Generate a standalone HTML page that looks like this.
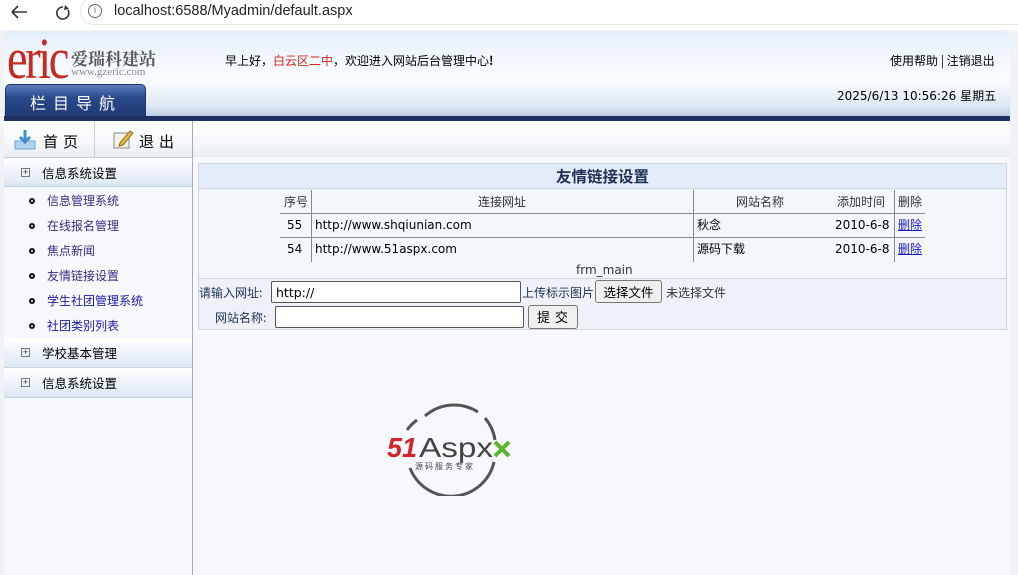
<!DOCTYPE html>
<html><head><meta charset="utf-8"><style>
*{margin:0;padding:0;box-sizing:border-box}
body{width:1018px;height:575px;overflow:hidden;background:#fff;font-family:"Liberation Sans","Noto Sans CJK SC",sans-serif;font-size:12px;color:#000;position:relative}
.abs{position:absolute}
.cjk{font-family:"Noto Sans CJK SC","WenQuanYi Zen Hei",sans-serif}
.dv{font-family:"DejaVu Sans",sans-serif}
</style></head><body>
<div class="abs" style="left:0;top:0;width:1018px;height:30px;background:#fff"></div>
<svg class="abs" style="left:8px;top:3px" width="70" height="20"><path d="M4 9h15M4 9l6-6M4 9l6 6" stroke="#333" stroke-width="1.6" fill="none"/><path d="M55 4a6 6 0 1 0 5 3" stroke="#333" stroke-width="1.6" fill="none"/><path d="M57 2l4 4-5 1z" fill="#333"/></svg>
<div class="abs" style="left:80px;top:-3px;width:960px;height:28px;border:1px solid #e5e5e5;border-radius:14px"></div>
<div class="abs" style="left:88px;top:4px;width:14px;height:14px;border:1.3px solid #666;border-radius:50%;font-size:9px;line-height:11px;text-align:center;color:#666">i</div>
<div class="abs" style="left:114px;top:3px;font-size:14.5px;color:#222">localhost:6588/Myadmin/default.aspx</div>
<div class="abs" style="left:0;top:30px;width:1018px;height:545px;background:#f0f2f5"></div>
<div class="abs" style="left:4px;top:31px;width:1006px;height:544px;background:#f6f8fc;border-radius:8px 8px 0 0"></div>
<div class="abs" style="left:4px;top:31px;width:1006px;height:86px;border-radius:8px 8px 0 0;background:linear-gradient(#e3eefb 0px,#f4f8fd 30px,#fafcff 50px,#dde7f3 75px,#b9cce3 86px)"></div>
<div class="abs" style="left:7px;top:30px;font-family:'Liberation Serif',serif;font-size:58px;color:#c5291f;line-height:58px;letter-spacing:-3px;transform:scaleX(0.8);transform-origin:left">eric</div>
<div class="abs" style="left:71px;top:45px;font-size:17px;color:#555;font-family:'Noto Serif CJK SC',serif;font-weight:bold">爱瑞科建站</div>
<div class="abs" style="left:71px;top:66px;font-size:11px;color:#888;font-family:'Liberation Serif',serif">www.gzeric.com</div>
<div class="abs" style="left:5px;top:84px;width:141px;height:33px;border-radius:5px 5px 0 0;background:linear-gradient(#5d7fbf,#2a4a8c 40%,#1f3a74);border:1px solid #20336b"></div>
<div class="abs cjk" style="left:30px;top:90px;font-size:16px;color:#fff;letter-spacing:7px">栏目导航</div>
<div class="abs cjk" style="left:225px;top:52px;font-size:12px">早上好，<span style="color:#d2261c">白云区二中</span>，欢迎进入网站后台管理中心<b>!</b></div>
<div class="abs cjk" style="left:890px;top:52px;font-size:12px">使用帮助 | 注销退出</div>
<div class="abs dv" style="left:837px;top:87px;font-size:12px">2025/6/13 10:56:26 <span class="cjk">星期五</span></div>
<div class="abs" style="left:4px;top:116px;width:1006px;height:5px;background:#1f3062"></div>
<div class="abs" style="left:4px;top:121px;width:1006px;height:36px;background:linear-gradient(#fff,#f5f7fa 60%,#e9edf2)"></div>
<div class="abs" style="left:94px;top:121px;width:1px;height:36px;background:#ccc"></div>
<div class="abs" style="left:192px;top:121px;width:1px;height:454px;background:#a5acb8"></div>
<div class="abs" style="left:4px;top:157px;width:188px;height:1px;background:#c9ced6"></div>
<svg class="abs" style="left:14px;top:129px" width="22" height="22"><rect x="1" y="12" width="20" height="8" fill="#aed3ef" stroke="#6fa0cc"/><path d="M11 1v12M6 8l5 5 5-5" stroke="#3b8ed3" stroke-width="3" fill="none"/></svg>
<div class="abs cjk" style="left:43px;top:131px;font-size:15px;letter-spacing:5px">首页</div>
<svg class="abs" style="left:112px;top:128px" width="22" height="22"><rect x="2" y="5" width="15" height="15" fill="#f4f2e6" stroke="#888"/><path d="M8 15l10-12 3 2-10 12-4 1z" fill="#e9b93d" stroke="#8a6d1e"/></svg>
<div class="abs cjk" style="left:139px;top:131px;font-size:15px;letter-spacing:5px">退出</div>
<div class="abs" style="left:4px;top:158px;width:188px;height:29px;background:linear-gradient(#fff,#eef3fa 50%,#dce7f4);border-bottom:1px solid #c6d3e3"></div>
<div class="abs" style="left:4px;top:338px;width:188px;height:30px;background:linear-gradient(#fff,#eef3fa 50%,#dce7f4);border-bottom:1px solid #c6d3e3"></div>
<div class="abs" style="left:4px;top:368px;width:188px;height:30px;background:linear-gradient(#fff,#eef3fa 50%,#dce7f4);border-bottom:1px solid #c6d3e3"></div>
<div class="abs" style="left:21px;top:168px;width:9px;height:9px;border:1px solid #777;font-size:9px;line-height:7px;text-align:center;color:#333">+</div>
<div class="abs" style="left:21px;top:348px;width:9px;height:9px;border:1px solid #777;font-size:9px;line-height:7px;text-align:center;color:#333">+</div>
<div class="abs" style="left:21px;top:378px;width:9px;height:9px;border:1px solid #777;font-size:9px;line-height:7px;text-align:center;color:#333">+</div>
<div class="abs cjk" style="left:42px;top:163px;font-size:12.5px">信息系统设置</div>
<div class="abs cjk" style="left:42px;top:343px;font-size:12.5px">学校基本管理</div>
<div class="abs cjk" style="left:42px;top:373px;font-size:12.5px">信息系统设置</div>
<div class="abs cjk" style="left:29px;top:188px;font-size:12px;line-height:25px;color:#3d2a86">
<div><span style="display:inline-block;width:6px;height:6px;border:2px solid #111;border-radius:50%;margin-right:12px;vertical-align:1px"></span>信息管理系统</div>
<div><span style="display:inline-block;width:6px;height:6px;border:2px solid #111;border-radius:50%;margin-right:12px;vertical-align:1px"></span>在线报名管理</div>
<div><span style="display:inline-block;width:6px;height:6px;border:2px solid #111;border-radius:50%;margin-right:12px;vertical-align:1px"></span>焦点新闻</div>
<div><span style="display:inline-block;width:6px;height:6px;border:2px solid #111;border-radius:50%;margin-right:12px;vertical-align:1px"></span>友情链接设置</div>
<div style="color:#1a1aa6"><span style="display:inline-block;width:6px;height:6px;border:2px solid #111;border-radius:50%;margin-right:12px;vertical-align:1px"></span>学生社团管理系统</div>
<div style="color:#1a1aa6"><span style="display:inline-block;width:6px;height:6px;border:2px solid #111;border-radius:50%;margin-right:12px;vertical-align:1px"></span>社团类别列表</div>
</div>
<div class="abs" style="left:198px;top:163px;width:809px;height:167px;border:1px solid #d0d6de;background:#eef2f8"></div>
<div class="abs" style="left:199px;top:164px;width:807px;height:25px;background:#e3ecf8;border-bottom:1px solid #cdd5df"></div>
<div class="abs cjk" style="left:556px;top:165px;font-size:15.5px;font-weight:bold;color:#1f2f55">友情链接设置</div>
<div class="abs" style="left:199px;top:190px;width:807px;height:88px;background:#f3f6fa"></div>
<div class="abs" style="left:311px;top:190px;width:1px;height:72px;background:#888"></div>
<div class="abs" style="left:693px;top:190px;width:1px;height:72px;background:#888"></div>
<div class="abs" style="left:894px;top:190px;width:1px;height:72px;background:#888"></div>
<div class="abs" style="left:280px;top:213px;width:645px;height:1px;background:#888"></div>
<div class="abs" style="left:280px;top:237px;width:645px;height:1px;background:#888"></div>
<div class="abs cjk" style="left:284px;top:193px;font-size:12px;color:#333">序号</div>
<div class="abs cjk" style="left:478px;top:193px;font-size:12px;color:#333">连接网址</div>
<div class="abs cjk" style="left:736px;top:193px;font-size:12px;color:#333">网站名称</div>
<div class="abs cjk" style="left:837px;top:193px;font-size:12px;color:#333">添加时间</div>
<div class="abs cjk" style="left:898px;top:193px;font-size:12px;color:#333">删除</div>
<div class="abs dv" style="left:287px;top:218px;font-size:12px">55</div>
<div class="abs dv" style="left:287px;top:242px;font-size:12px">54</div>
<div class="abs dv" style="left:315px;top:218px;font-size:12px">http://www.shqiunian.com</div>
<div class="abs dv" style="left:315px;top:242px;font-size:12px">http://www.51aspx.com</div>
<div class="abs cjk" style="left:697px;top:216px;font-size:12px">秋念</div>
<div class="abs cjk" style="left:697px;top:240px;font-size:12px">源码下载</div>
<div class="abs dv" style="left:835px;top:218px;font-size:12px">2010-6-8</div>
<div class="abs dv" style="left:835px;top:242px;font-size:12px">2010-6-8</div>
<div class="abs cjk" style="left:898px;top:216px;font-size:12px;color:#1a1acc;text-decoration:underline">删除</div>
<div class="abs cjk" style="left:898px;top:240px;font-size:12px;color:#1a1acc;text-decoration:underline">删除</div>
<div class="abs dv" style="left:576px;top:263px;font-size:12px;color:#333">frm_main</div>
<div class="abs" style="left:199px;top:278px;width:807px;height:1px;background:#cdd5df"></div>
<div class="abs cjk" style="left:199px;top:284px;font-size:12px;color:#1f2f55">请输入网址:</div>
<div class="abs dv" style="left:271px;top:281px;width:250px;height:22px;border:1px solid #555;border-radius:2px;background:#fff;padding:3px 4px;font-size:12.5px">http://</div>
<div class="abs cjk" style="left:522px;top:284px;font-size:12px;color:#1f2f55">上传标示图片</div>
<div class="abs cjk" style="left:595px;top:280px;width:67px;height:23px;border:1px solid #777;border-radius:3px;background:#efefef;font-size:12.5px;text-align:center;line-height:21px">选择文件</div>
<div class="abs cjk" style="left:666px;top:284px;font-size:12px;color:#333">未选择文件</div>
<div class="abs cjk" style="left:215px;top:309px;font-size:12px;color:#1f2f55">网站名称:</div>
<div class="abs" style="left:275px;top:306px;width:249px;height:22px;border:1px solid #555;border-radius:2px;background:#fff"></div>
<div class="abs cjk" style="left:528px;top:305px;width:50px;height:24px;border:1px solid #777;border-radius:3px;background:#efefef;font-size:13px;text-align:center;line-height:22px;letter-spacing:5px;padding-left:4px">提交</div>
<svg class="abs" style="left:385px;top:400px" width="130" height="96">
<path d="M40 16A44 44 0 0 1 93 12" stroke="#555" stroke-width="3" fill="none"/>
<path d="M100 18A44 44 0 0 1 110 40" stroke="#555" stroke-width="3" fill="none"/>
<path d="M109 62A44 44 0 0 1 25 68" stroke="#555" stroke-width="3" fill="none"/>
<path d="M22 30A44 44 0 0 1 32 20" stroke="#555" stroke-width="3" fill="none"/>
<text x="2" y="57" font-family="Liberation Sans" font-style="italic" font-weight="bold" font-size="28" fill="#d0252a" textLength="30" lengthAdjust="spacingAndGlyphs">51</text>
<text x="34" y="57" font-family="Liberation Sans" font-size="28" fill="#444" textLength="74" lengthAdjust="spacingAndGlyphs">Aspx</text>
<path d="M110 42l14 14M124 42l-14 14" stroke="#5ab52f" stroke-width="4"/>
<text x="30" y="69" font-family="Noto Sans CJK SC" font-size="8" fill="#444" letter-spacing="2">源码服务专家</text>
</svg>
</body></html>
